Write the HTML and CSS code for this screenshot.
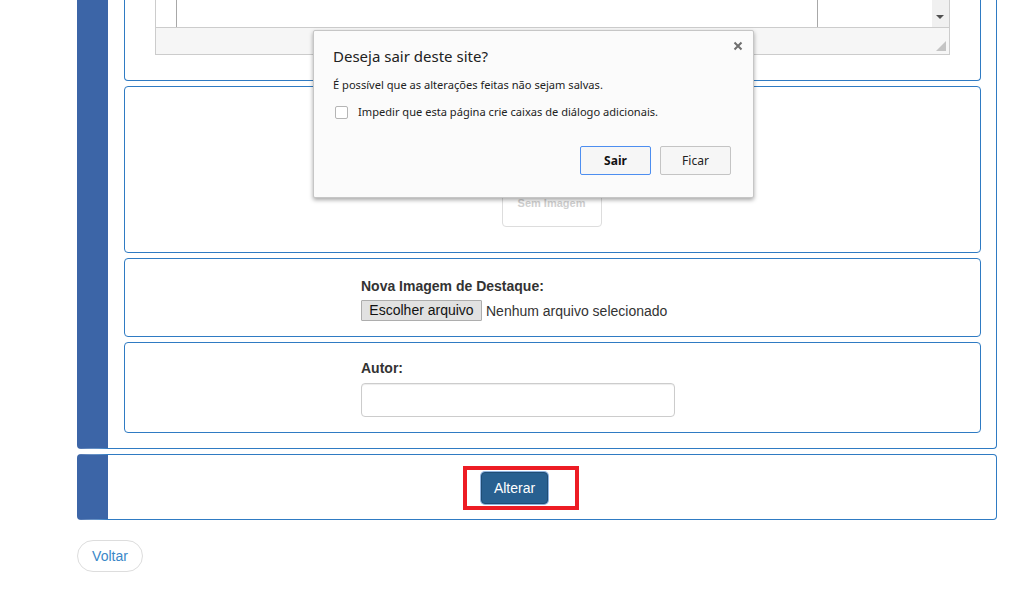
FILE: index.html
```html
<!DOCTYPE html>
<html lang="pt-BR">
<head>
<meta charset="utf-8">
<title>Alterar notícia</title>
<link rel="stylesheet" href="styles.css">
</head>
<body>
<div class="page">
  <div class="panel panel-main">
    <div class="box box-editor">
      <div class="editor">
        <div class="editor-rows">
          <div class="cell cell-num"></div>
          <div class="cell cell-text"></div>
          <div class="cell cell-extra"></div>
          <div class="scrollbar"><span class="arrow-down"></span></div>
        </div>
        <div class="editor-foot"><span class="grip"></span></div>
      </div>
    </div>
    <div class="box box-image">
      <div class="thumb">Sem Imagem</div>
    </div>
    <div class="box box-field box-file">
      <div class="field">
        <label class="label">Nova Imagem de Destaque:</label>
        <div class="file-row">
          <span class="file-btn">Escolher arquivo</span>
          <span class="file-name">Nenhum arquivo selecionado</span>
        </div>
      </div>
    </div>
    <div class="box box-field box-author">
      <div class="field">
        <label class="label">Autor:</label>
        <div class="text-input"></div>
      </div>
    </div>
  </div>

  <div class="panel panel-actions">
    <button class="btn-primary">Alterar</button>
    <span class="highlight"></span>
  </div>

  <button class="btn-back">Voltar</button>
</div>

<div class="dialog">
  <span class="dialog-close">
    <svg width="10" height="10" viewBox="0 0 10 10"><path d="M1.5 1.5 L8.5 8.5 M8.5 1.5 L1.5 8.5" stroke="#6f6f6f" stroke-width="2"/></svg>
  </span>
  <div class="dialog-title">Deseja sair deste site?</div>
  <div class="dialog-text">É possível que as alterações feitas não sejam salvas.</div>
  <div class="dialog-check"><span class="checkbox"></span>Impedir que esta página crie caixas de diálogo adicionais.</div>
  <div class="dialog-buttons">
    <span class="dbtn dbtn-primary">Sair</span>
    <span class="dbtn">Ficar</span>
  </div>
</div>
</body>
</html>
```

FILE: styles.css
```css
html, body {
  margin: 0;
  padding: 0;
  background: #fff;
}
body {
  font-family: "Liberation Sans", Arial, sans-serif;
  font-size: 14px;
  color: #333;
  overflow: hidden;
  height: 613px;
}
.page {
  width: 920px;
  margin-left: 77px;
}
.panel {
  border: 1px solid #2f7bc3;
  border-left: 31px solid #3c65a7;
  border-radius: 4px;
  box-sizing: border-box;
}
.panel-main {
  border-top: 0;
  border-top-left-radius: 0;
  border-top-right-radius: 0;
  padding: 0 15px 14px 16px;
  height: 449px;
  display: flex;
  flex-direction: column;
  gap: 5px;
}
.box {
  border: 1px solid #2f7bc3;
  border-radius: 4px;
  box-sizing: border-box;
}
.box-editor {
  border-top: 0;
  border-top-left-radius: 0;
  border-top-right-radius: 0;
  height: 81px;
  padding: 0 30px 0 30px;
}
.editor {
  border: 1px solid #cccccc;
  border-top: 0;
  height: 55px;
  box-sizing: border-box;
  display: flex;
  flex-direction: column;
}
.editor-rows {
  height: 27px;
  display: flex;
  border-bottom: 1px solid #cccccc;
  background: #fff;
}
.cell-num {
  width: 20px;
  border-right: 1px solid #a8a8a8;
}
.cell-text {
  width: 640px;
  border-right: 1px solid #a8a8a8;
}
.cell-extra {
  flex: 1;
}
.scrollbar {
  width: 17px;
  background: #f0f0f0;
  position: relative;
}
.arrow-down {
  position: absolute;
  left: 4px;
  top: 15px;
  width: 0;
  height: 0;
  border-left: 4px solid transparent;
  border-right: 4px solid transparent;
  border-top: 4px solid #505050;
}
.editor-foot {
  flex: 1;
  background: #f6f6f6;
  position: relative;
}
.grip {
  position: absolute;
  right: 3px;
  bottom: 3px;
  width: 0;
  height: 0;
  border-left: 10px solid transparent;
  border-bottom: 10px solid #c4c4c4;
}
.box-image {
  height: 167px;
  display: flex;
  align-items: flex-end;
  justify-content: center;
  padding-bottom: 25px;
}
.thumb {
  width: 100px;
  height: 70px;
  box-sizing: border-box;
  border: 1px solid #dddddd;
  border-radius: 4px;
  color: #cfcfcf;
  font-weight: bold;
  font-size: 11px;
  display: flex;
  align-items: center;
  justify-content: center;
  padding-top: 22px;
  margin-left: -2px;
}
.box-field {
  padding-left: 236px;
}
.box-file {
  height: 79px;
  padding-top: 17px;
}
.box-author {
  height: 91px;
  padding-top: 15px;
}
.field {
  display: flex;
  flex-direction: column;
  align-items: flex-start;
}
.label {
  font-weight: bold;
  line-height: 20px;
  color: #333;
  margin-bottom: 4px;
}
.box-author .label {
  margin-bottom: 5px;
}
.file-row {
  display: flex;
  align-items: center;
  height: 21px;
  color: #333;
}
.file-btn {
  height: 21px;
  box-sizing: border-box;
  width: 121px;
  border: 1px solid #adadad;
  background: #e1e1e1;
  color: #111;
  font-size: 14px;
  line-height: 19px;
  text-align: center;
  border-radius: 1px;
  margin-right: 4px;
}
.file-name {
  font-size: 14px;
  color: #333;
}
.text-input {
  width: 314px;
  height: 34px;
  box-sizing: border-box;
  border: 1px solid #cccccc;
  border-radius: 4px;
  background: #fff;
  box-shadow: inset 0 1px 1px rgba(0,0,0,0.075);
}
.panel-actions {
  margin-top: 5px;
  height: 66px;
  padding: 17px 0 0 373px;
  position: relative;
}
.btn-primary {
  display: block;
  width: 67px;
  height: 32px;
  background: #286090;
  border: 1px solid #204d74;
  border-radius: 4px;
  color: #fff;
  font-family: "Liberation Sans", Arial, sans-serif;
  font-size: 14px;
  padding: 0;
  box-shadow: 0 0 0 1px #8fb4e0;
}
.highlight {
  position: absolute;
  left: 355px;
  top: 11px;
  width: 116px;
  height: 44px;
  box-sizing: border-box;
  border: 4px solid #ed1c24;
}
.btn-back {
  display: block;
  margin-top: 20px;
  width: 66px;
  height: 32px;
  border: 1px solid #dddddd;
  border-radius: 16px;
  background: #fff;
  color: #3a87c8;
  font-family: "Liberation Sans", Arial, sans-serif;
  font-size: 14px;
  padding: 0;
}
.dialog {
  position: absolute;
  left: 313px;
  top: 30px;
  width: 441px;
  height: 168px;
  box-sizing: border-box;
  background: #fbfbfb;
  border: 1px solid #c6c6c6;
  border-radius: 2px;
  box-shadow: 0 2px 4px rgba(0,0,0,0.35);
  padding: 15px 22px 0 19px;
  font-family: "Noto Sans", "Open Sans", sans-serif;
  color: #222;
}
.dialog-close {
  position: absolute;
  right: 10px;
  top: 10px;
  width: 10px;
  height: 10px;
  display: block;
}
.dialog-close svg {
  display: block;
}
.dialog-title {
  font-size: 15px;
  line-height: 20px;
  color: #222;
}
.dialog-text {
  margin-top: 11px;
  font-size: 11.1px;
  line-height: 16px;
}
.dialog-check {
  margin-top: 11px;
  font-size: 11.1px;
  line-height: 16px;
  display: flex;
  align-items: center;
}
.checkbox {
  width: 13px;
  height: 13px;
  box-sizing: border-box;
  border: 1px solid #b5b5b5;
  border-radius: 2px;
  background: #fff;
  margin: 0 10px 0 2px;
}
.dialog-buttons {
  margin-top: 26px;
  display: flex;
  justify-content: flex-end;
  gap: 9px;
}
.dbtn {
  width: 71px;
  height: 29px;
  box-sizing: border-box;
  border: 1px solid #c4c4c4;
  border-radius: 2px;
  background: #f6f6f6;
  font-size: 12px;
  line-height: 27px;
  text-align: center;
  color: #222;
}
.dbtn-primary {
  border-color: #4d8ef0;
  font-weight: bold;
  color: #111;
}
```
